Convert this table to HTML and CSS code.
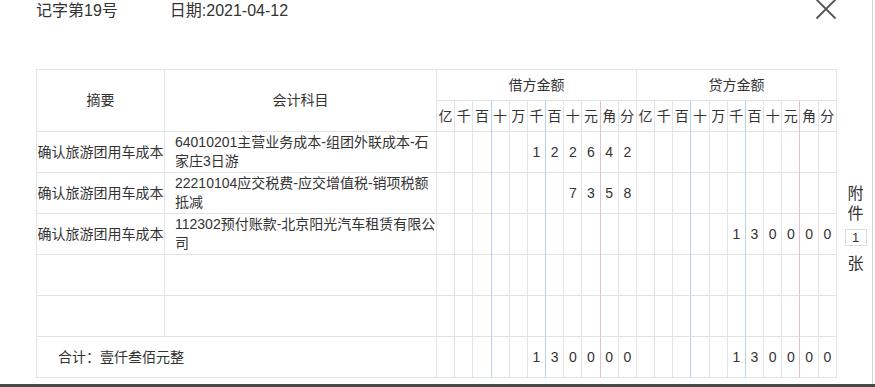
FILE: index.html
```html
<!DOCTYPE html>
<html lang="zh-CN">
<head>
<meta charset="utf-8">
<title>记账凭证</title>
<link rel="stylesheet" href="styles.css">
</head>
<body>
<div class="page">
  <div class="dialog">
    <button class="close" aria-label="关闭">
      <svg width="22" height="22" viewBox="0 0 22 22"><path d="M1.5 1.5 L20.5 20.5 M20.5 1.5 L1.5 20.5" stroke="#555" stroke-width="1.8" fill="none"/></svg>
    </button>
    <div class="meta"><span>记字第19号</span><span class="date">日期:2021-04-12</span></div>
    <div class="body">
      <table class="voucher">
        <colgroup><col class="c-summary"><col class="c-account"></colgroup>
        <tr class="h1">
          <td rowspan="2">摘要</td>
          <td rowspan="2">会计科目</td>
          <td colspan="11">借方金额</td>
          <td colspan="11">贷方金额</td>
        </tr>
        <tr class="h2">
          <td>亿</td><td>千</td><td class="b">百</td><td>十</td><td>万</td><td class="b">千</td><td>百</td><td>十</td><td class="r">元</td><td>角</td><td>分</td>
          <td>亿</td><td>千</td><td class="b">百</td><td>十</td><td>万</td><td class="b">千</td><td>百</td><td>十</td><td class="r">元</td><td>角</td><td>分</td>
        </tr>
        <tr class="row">
          <td>确认旅游团用车成本</td>
          <td class="acct">64010201主营业务成本-组团外联成本-石家庄3日游</td>
          <td></td><td></td><td class="b"></td><td></td><td></td><td class="b">1</td><td>2</td><td>2</td><td class="r">6</td><td>4</td><td>2</td>
          <td></td><td></td><td class="b"></td><td></td><td></td><td class="b"></td><td></td><td></td><td class="r"></td><td></td><td></td>
        </tr>
        <tr class="row">
          <td>确认旅游团用车成本</td>
          <td class="acct">22210104应交税费-应交增值税-销项税额抵减</td>
          <td></td><td></td><td class="b"></td><td></td><td></td><td class="b"></td><td></td><td>7</td><td class="r">3</td><td>5</td><td>8</td>
          <td></td><td></td><td class="b"></td><td></td><td></td><td class="b"></td><td></td><td></td><td class="r"></td><td></td><td></td>
        </tr>
        <tr class="row">
          <td>确认旅游团用车成本</td>
          <td class="acct">112302预付账款-北京阳光汽车租赁有限公司</td>
          <td></td><td></td><td class="b"></td><td></td><td></td><td class="b"></td><td></td><td></td><td class="r"></td><td></td><td></td>
          <td></td><td></td><td class="b"></td><td></td><td></td><td class="b">1</td><td>3</td><td>0</td><td class="r">0</td><td>0</td><td>0</td>
        </tr>
        <tr class="row">
          <td></td>
          <td class="acct"></td>
          <td></td><td></td><td class="b"></td><td></td><td></td><td class="b"></td><td></td><td></td><td class="r"></td><td></td><td></td>
          <td></td><td></td><td class="b"></td><td></td><td></td><td class="b"></td><td></td><td></td><td class="r"></td><td></td><td></td>
        </tr>
        <tr class="row">
          <td></td>
          <td class="acct"></td>
          <td></td><td></td><td class="b"></td><td></td><td></td><td class="b"></td><td></td><td></td><td class="r"></td><td></td><td></td>
          <td></td><td></td><td class="b"></td><td></td><td></td><td class="b"></td><td></td><td></td><td class="r"></td><td></td><td></td>
        </tr>
        <tr class="row total">
          <td colspan="2" class="sum">合计：壹仟叁佰元整</td>
          <td></td><td></td><td class="b"></td><td></td><td></td><td class="b">1</td><td>3</td><td>0</td><td class="r">0</td><td>0</td><td>0</td>
          <td></td><td></td><td class="b"></td><td></td><td></td><td class="b">1</td><td>3</td><td>0</td><td class="r">0</td><td>0</td><td>0</td>
        </tr>
      </table>
      <div class="attach">
        <span>附</span>
        <span>件</span>
        <span class="count">1</span>
        <span>张</span>
      </div>
    </div>
  </div>
</div>
</body>
</html>
```

FILE: styles.css
```css
* { box-sizing: border-box; }

body {
  margin: 0;
  background: #fff;
  color: #333;
  font-family: "Liberation Sans", "Noto Sans CJK SC", sans-serif;
}

.page {
  width: 875px;
  height: 387px;
  overflow: hidden;
  border-bottom: 3px solid #4a4a4a;
}

.dialog {
  position: relative;
  width: 873px;
  height: 384px;
  border-right: 1px solid #d6d6d6;
}

.close {
  position: absolute;
  left: 815px;
  top: -2px;
  width: 22px;
  height: 22px;
  padding: 0;
  border: 0;
  background: none;
}

.close svg { display: block; }

.meta {
  display: flex;
  height: 22px;
  margin-bottom: 47px;
  padding-left: 36px;
  font-size: 16px;
  line-height: 22px;
}

.meta .date { margin-left: 52px; }

.body {
  display: flex;
  padding-left: 36px;
}

.voucher {
  width: 801px;
  table-layout: fixed;
  border-collapse: separate;
  border-spacing: 0;
  border-top: 1px solid #e3e3e3;
  border-left: 1px solid #e3e3e3;
  font-size: 14px;
}

.c-summary { width: 128px; }
.c-account { width: 272px; }

.voucher td {
  padding: 0;
  border-right: 1px solid #e3e3e3;
  border-bottom: 1px solid #e3e3e3;
  text-align: center;
  vertical-align: middle;
  line-height: 19px;
}

.voucher td.b { border-right-color: #b4d2ea; }
.voucher td.r { border-right-color: #e7bfc7; }

.h1 td { height: 31px; }
.h2 td { height: 31px; }
.row td { height: 41px; }

.voucher td.acct {
  text-align: left;
  padding-left: 10px;
}

.voucher td.sum {
  text-align: left;
  padding-left: 21px;
}

.attach {
  width: 35px;
  display: flex;
  flex-direction: column;
  align-items: center;
  justify-content: center;
  padding-top: 11px;
  padding-left: 2px;
  font-size: 16px;
  line-height: 20px;
}

.attach .count {
  width: 22px;
  height: 17px;
  margin: 5px 0 8px;
  border: 1px solid #dcdcdc;
  font-size: 13px;
  line-height: 15px;
  text-align: center;
}
```
